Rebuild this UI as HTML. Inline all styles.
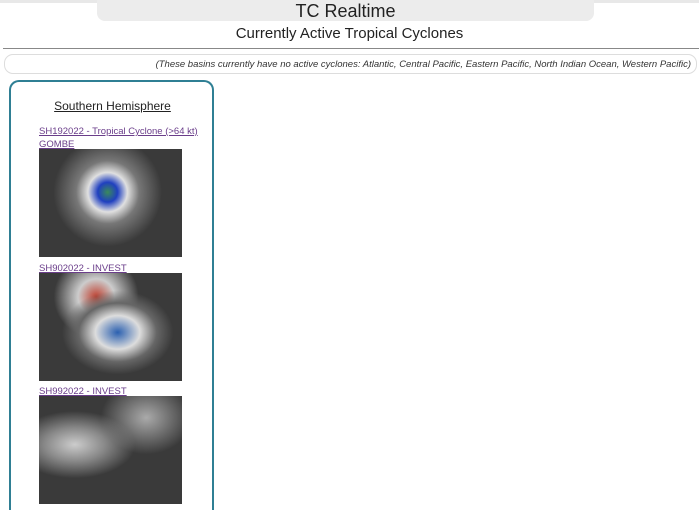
<!DOCTYPE html>
<html style="height:510px;overflow:hidden"><head><style>
body{margin:0;width:699px;height:510px;overflow:hidden;background:#fff;font-family:"Liberation Sans",sans-serif;position:relative}
.top{position:absolute;left:0;top:0;width:699px;height:3px;background:#e8e8e8}
.title{position:absolute;left:97px;top:0;width:497px;height:21px;background:#ececec;border-radius:0 0 8px 8px;text-align:center;font-size:18px;line-height:22px;color:#222}
.sub{position:absolute;left:0;width:699px;top:25px;text-align:center;font-size:15px;color:#222}
.hr{position:absolute;left:3px;width:696px;top:48px;height:1px;background:#888}
.note{position:absolute;left:4px;top:54px;width:691px;height:18px;border:1px solid #ddd;border-radius:9px;font-size:9.5px;font-style:italic;text-align:right;line-height:19px;color:#333}
.note span{padding-right:5px}
.panel{position:absolute;left:9px;top:80px;width:201px;height:428px;border:2px solid #2f7f94;border-bottom:none;border-radius:10px 10px 0 0}
.h{position:absolute;left:0;width:203px;top:17px;text-align:center;font-size:12px;text-decoration:underline;color:#222}
a{position:absolute;left:28px;font-size:9.5px;color:#6a3d8a;text-decoration:underline;white-space:nowrap}
.img{position:absolute;left:28px;width:143px;background:#3a3a3a}
</style></head><body>
<div class="top"></div>
<div class="title">TC Realtime</div>
<div class="sub">Currently Active Tropical Cyclones</div>
<div class="hr"></div>
<div class="note"><span>(These basins currently have no active cyclones: Atlantic, Central Pacific, Eastern Pacific, North Indian Ocean, Western Pacific)</span></div>
<div class="panel">
<div class="h">Southern Hemisphere</div>
<a style="top:44px">SH192022 - Tropical Cyclone (&gt;64 kt)</a>
<a style="top:57px">GOMBE</a>
<div class="img" style="top:67px;height:108px;background:radial-gradient(circle at 48% 40%,#3a8a5a 0,#2040c0 10%,#e0e0e0 20%,#777 32%,#3a3a3a 55%),#3a3a3a"></div>
<a style="top:181px">SH902022 - INVEST</a>
<div class="img" style="top:191px;height:108px;background:radial-gradient(ellipse at 55% 55%,#2b60b0 0,#ddd 20%,#666 35%,transparent 50%),radial-gradient(ellipse at 40% 22%,#c04030 0,#ccc 15%,transparent 35%),#3a3a3a"></div>
<a style="top:304px">SH992022 - INVEST</a>
<div class="img" style="top:314px;height:108px;background:radial-gradient(ellipse at 25% 45%,#ccc 0,#888 20%,transparent 40%),radial-gradient(ellipse at 75% 20%,#aaa 0,transparent 30%),#3a3a3a"></div>
</div>
</body></html>
